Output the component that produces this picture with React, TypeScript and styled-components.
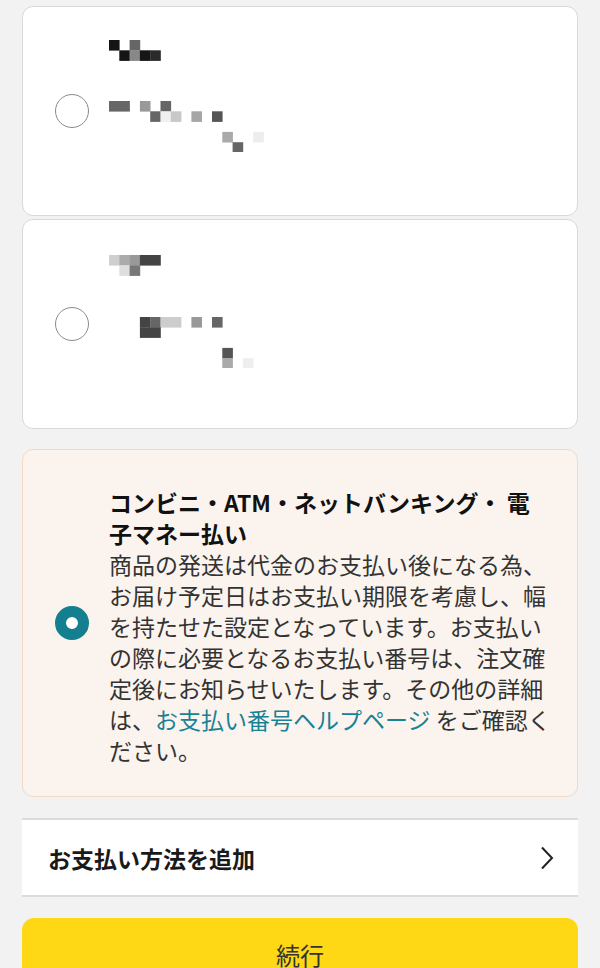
import styled, { createGlobalStyle } from "styled-components";

const GlobalStyle = createGlobalStyle`
  html, body {
    margin: 0;
    padding: 0;
    background: #f2f2f2;
  }
  body {
    font-family: "Noto Sans CJK JP", "Noto Sans", sans-serif;
    color: #111;
  }
`;

const Page = styled.div`
  display: flex;
  flex-direction: column;
  padding: 6px 22px 0;
  & > * {
    flex-shrink: 0;
  }
`;

const Card = styled.div`
  display: flex;
  box-sizing: border-box;
  border-radius: 11px;
  ${(props) => `
    background: ${props.selected ? "#fbf4ee" : "#fff"};
    border: 1px solid ${props.selected ? "#f4d8c6" : "#d9d9d9"};
    min-height: ${props.selected ? "auto" : "210px"};
    margin-bottom: ${props.gap}px;
  `}
`;

const RadioCol = styled.div`
  display: flex;
  align-items: center;
  padding: 0 20px 0 32px;
`;

const Radio = styled.div`
  width: 34px;
  height: 34px;
  border-radius: 50%;
  box-sizing: border-box;
  ${(props) =>
    props.checked
      ? `border: 11px solid #137f8f; background: #fff;`
      : `border: 1.5px solid #8a8a8a; background: #fff;`}
`;

const Content = styled.div`
  padding-top: ${(props) => props.top}px;
`;

const Body = styled.div`
  width: 446px;
  padding: 37px 0 30px;
  font-size: 23px;
  line-height: 31px;
  color: #333;
`;

const Title = styled.div`
  font-weight: 700;
  color: #111;
`;

const Link = styled.span`
  color: #1a8194;
`;

const AddRow = styled.div`
  display: flex;
  align-items: center;
  justify-content: space-between;
  height: 79px;
  box-sizing: border-box;
  background: #fff;
  border-top: 2px solid #dcdcdc;
  border-bottom: 2px solid #dcdcdc;
  padding: 0 24px 0 26px;
  margin-bottom: 21px;
`;

const AddLabel = styled.span`
  font-size: 23px;
  font-weight: 700;
  color: #1a1a1a;
`;

const Button = styled.button`
  height: 72px;
  border: none;
  border-radius: 12px;
  background: #fed715;
  font-family: "Noto Sans CJK JP", sans-serif;
  font-size: 24px;
  color: #333;
  padding: 0;
`;

type Cell = [number, number, string, number?];

const CELL = 10.3;

const Mosaic = ({ cells, rows }: { cells: Cell[]; rows: number }) => (
  <svg width={170} height={rows * CELL} style={{ display: "block" }}>
    {cells.map(([c, r, color, w = 1], i) => (
      <rect
        key={i}
        x={c * CELL}
        y={r * CELL}
        width={w * CELL + 0.3}
        height={CELL + 0.3}
        fill={color}
      />
    ))}
  </svg>
);

const card1Title: Cell[] = [
  [0, 0, "#141414"],
  [2, 0, "#666"],
  [1, 1, "#141414"],
  [2, 1, "#888"],
  [3, 1, "#161616"],
  [4, 1, "#2a2a2a"],
];
const card1Body: Cell[] = [
  [0, 0, "#666", 2],
  [3, 0, "#999"],
  [5, 0, "#666"],
  [4, 1, "#666"],
  [5, 1, "#f0f0f0"],
  [6, 1, "#c8c8c8"],
  [8, 1, "#a6a6a6"],
  [10, 1, "#555"],
  [11, 3, "#aaa"],
  [14, 3, "#ededed"],
  [12, 4, "#666"],
];
const card2Title: Cell[] = [
  [0, 0, "#cfcfcf"],
  [1, 0, "#ababab"],
  [2, 0, "#999"],
  [3, 0, "#444", 2],
  [1, 1, "#dedede"],
  [2, 1, "#777"],
];
const card2Body: Cell[] = [
  [3, 0, "#444"],
  [4, 0, "#666"],
  [5, 0, "#cdcdcd", 2],
  [8, 0, "#999"],
  [10, 0, "#666"],
  [3, 1, "#444", 2],
  [11, 3, "#555"],
  [11, 4, "#aaa"],
  [13, 4, "#eee"],
];

export default function App() {
  return (
    <>
      <GlobalStyle />
      <Page>
        <Card gap={3}>
          <RadioCol>
            <Radio />
          </RadioCol>
          <Content top={33}>
            <Mosaic cells={card1Title} rows={2} />
            <div style={{ height: 40 }} />
            <Mosaic cells={card1Body} rows={5} />
          </Content>
        </Card>
        <Card gap={20}>
          <RadioCol>
            <Radio />
          </RadioCol>
          <Content top={35}>
            <Mosaic cells={card2Title} rows={2} />
            <div style={{ height: 41 }} />
            <Mosaic cells={card2Body} rows={5} />
          </Content>
        </Card>
        <Card selected gap={21}>
          <RadioCol>
            <Radio checked />
          </RadioCol>
          <Body>
            <Title>
              コンビニ・ATM・ネットバンキング・ 電<br />
              子マネー払い
            </Title>
            商品の発送は代金のお支払い後になる為、お届け予定日はお支払い期限を考慮し、幅を持たせた設定となっています。お支払いの際に必要となるお支払い番号は、注文確定後にお知らせいたします。その他の詳細は、
            <Link>お支払い番号ヘルプページ</Link> をご確認ください。
          </Body>
        </Card>
        <AddRow>
          <AddLabel>お支払い方法を追加</AddLabel>
          <svg width="14" height="24" viewBox="0 0 14 24">
            <path
              d="M2 1.5 L12 12 L2 22.5"
              fill="none"
              stroke="#222"
              strokeWidth="2"
            />
          </svg>
        </AddRow>
        <Button>続行</Button>
      </Page>
    </>
  );
}
